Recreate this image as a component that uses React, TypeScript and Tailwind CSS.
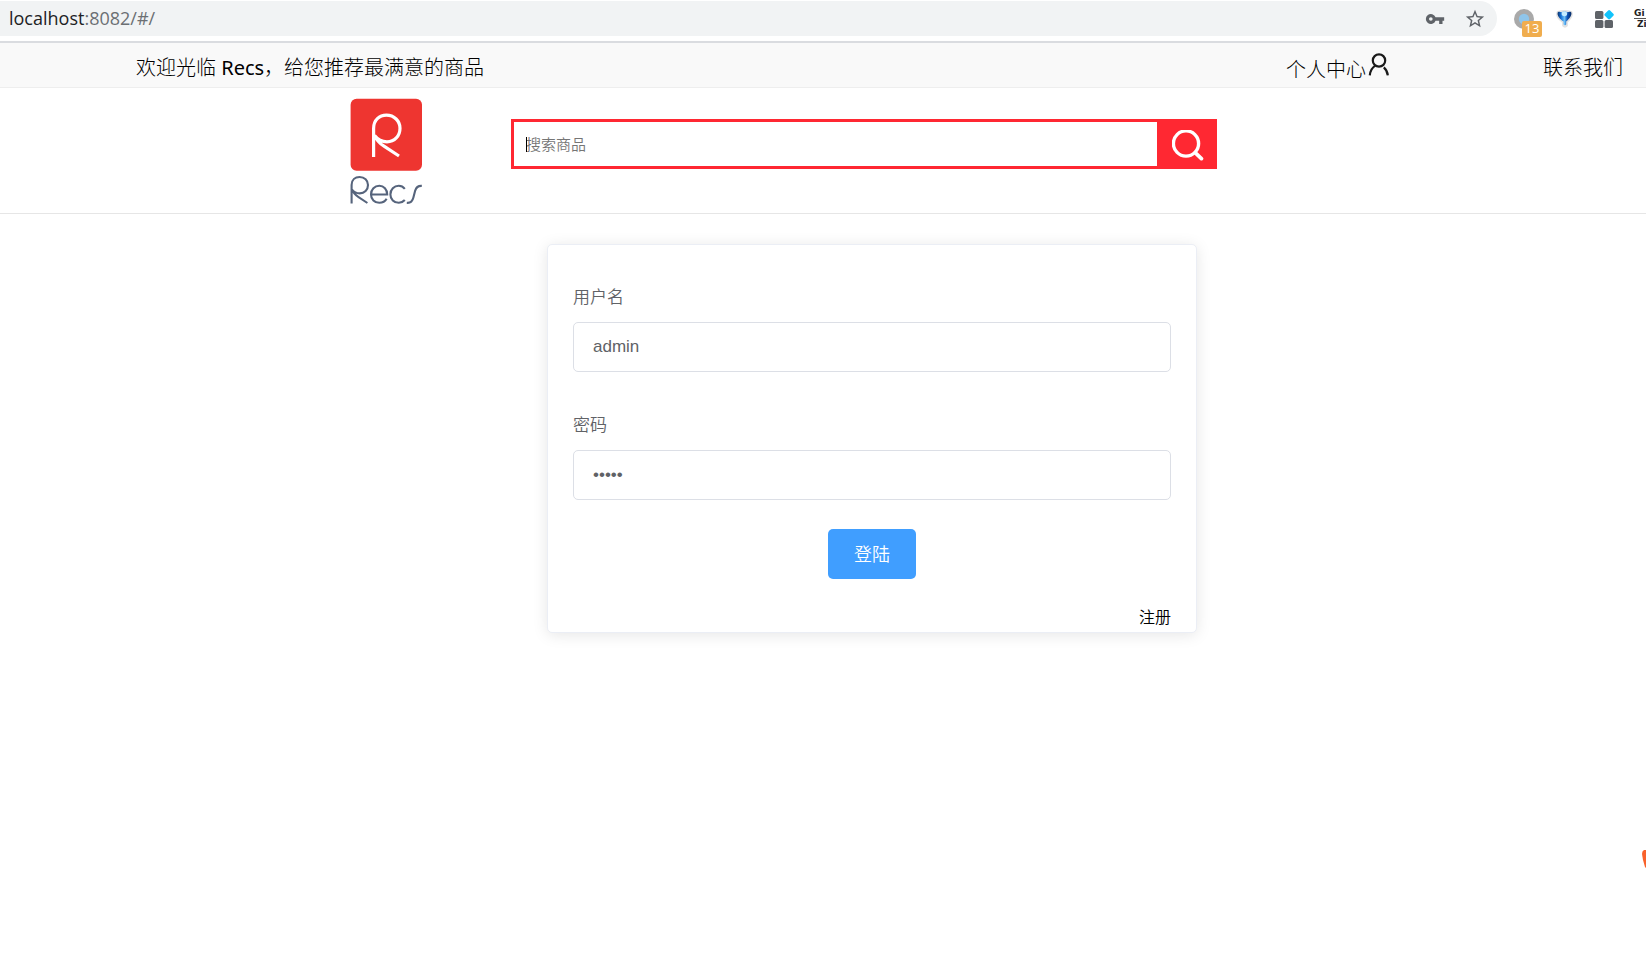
import React from "react";

function KeyIcon() {
  return (
    <svg viewBox="0 0 24 24" className="size-5 shrink-0" fill="#5f6368" aria-hidden="true">
      <path d="M12.65 10A6 6 0 1 0 12.65 14H17v4h4v-4h2v-4H12.65zM7 14.2a2.2 2.2 0 1 1 0-4.4 2.2 2.2 0 0 1 0 4.4z" />
    </svg>
  );
}

function StarIcon() {
  return (
    <svg viewBox="0 0 24 24" className="size-[22px] shrink-0" fill="#5f6368" aria-hidden="true">
      <path d="M22 9.24l-7.19-.62L12 2 9.19 8.63 2 9.24l5.46 4.73L5.82 21 12 17.27 18.18 21l-1.63-7.03L22 9.24zM12 15.4l-3.76 2.27 1-4.28-3.32-2.88 4.38-.38L12 6.1l1.71 4.04 4.38.38-3.32 2.88 1 4.28L12 15.4z" />
    </svg>
  );
}

function BrowserBar() {
  return (
    <div className="flex h-[43px] items-start overflow-hidden border-b-2 border-[#dadce0] bg-white pt-px font-['Open_Sans','Noto_Sans',sans-serif] font-normal">
      <div className="flex h-[35px] min-w-0 flex-1 items-center rounded-r-full bg-[#f1f3f4] pr-[11px] pl-[9px]">
        <span className="flex-1 pb-0.5 text-lg text-[#6b6f73]">
          <span className="text-[#202124]">localhost</span>:8082/#/
        </span>
        <div className="flex items-center gap-[19px]">
          <button type="button" aria-label="key" className="flex">
            <KeyIcon />
          </button>
          <button type="button" aria-label="star" className="flex">
            <StarIcon />
          </button>
        </div>
      </div>
      <div className="flex h-[35px] w-[149px] shrink-0 items-center pl-[17px]">
        <div className="relative mr-5 size-5 shrink-0">
          <svg viewBox="0 0 20 20" className="size-5" aria-hidden="true">
            <circle cx="10" cy="10" r="10" fill="#a9a9a9" />
            <circle cx="10" cy="10" r="5.2" fill="#8fc5ea" />
          </svg>
          <span className="absolute top-3 left-2 flex h-4 w-5 items-center justify-center rounded-xs bg-[#f0ad4e] text-[13px] leading-none text-white">
            13
          </span>
        </div>
        <svg viewBox="0 0 20 20" className="mr-5 size-5 shrink-0" aria-hidden="true">
          <defs>
            <linearGradient id="drop" x1="0" x2="1" y1="0" y2="0">
              <stop offset="0" stopColor="#0a2f66" />
              <stop offset="0.25" stopColor="#1672d6" />
              <stop offset="0.5" stopColor="#6cc0f8" />
              <stop offset="0.7" stopColor="#0f55b8" />
              <stop offset="1" stopColor="#082a63" />
            </linearGradient>
          </defs>
          <path
            d="M3.8 3C8 2 13 2 17.2 3C19 6.4 15.6 10.4 12.8 13V16.6Q11 18.6 9.2 16.6V13C5.4 10.4 2 6.4 3.8 3Z"
            fill="#ffffff"
            stroke="#e2e2e2"
            strokeWidth="2.2"
          />
          <path
            d="M3.8 3.2C5.2 2.4 6.4 3 7.4 3.2C9 2.4 12 2.4 13.6 3.2C14.6 3 15.8 2.4 17.2 3.2C18.4 6.4 14.8 10 12.2 12.6V15.6Q11 17.2 9.6 15.6V12.6C6 10 2.6 6.4 3.8 3.2Z"
            fill="url(#drop)"
          />
          <ellipse cx="10.4" cy="4.8" rx="2.8" ry="2.4" fill="#c4ecff" />
        </svg>
        <svg viewBox="0 0 20 20" className="mr-5 size-5 shrink-0" aria-hidden="true">
          <rect x="1" y="2" width="8.4" height="8" rx="1.5" fill="#5f6368" />
          <rect x="1" y="11" width="8.4" height="8" rx="1.5" fill="#5f6368" />
          <rect x="10.6" y="11" width="8.4" height="8" rx="1.5" fill="#5f6368" />
          <rect x="11.4" y="2" width="7.4" height="7.4" rx="1.4" fill="#12c3fb" transform="rotate(45 15.1 5.7)" />
        </svg>
        <div className="flex w-3 shrink-0 flex-col font-['DejaVu_Sans'] text-[9px] leading-[10px] font-bold text-[#222]">
          <span className="border-b border-[#555]">Gi</span>
          <span className="pl-[3px]">Zi</span>
        </div>
      </div>
    </div>
  );
}

function UserIcon() {
  return (
    <svg viewBox="0 0 22 24" className="mb-1.5 h-6 w-[22px]" fill="none" stroke="#1a1a1a" strokeWidth="2.2" aria-hidden="true">
      <circle cx="11" cy="7.5" r="6.2" />
      <path d="M7.4 12.6C4 14.6 2.2 17.8 1.8 22.4M15.8 14.4C18.2 16.4 19.4 19 19.8 22.4" />
    </svg>
  );
}

function TopBar() {
  return (
    <nav className="flex h-[45px] items-center border-b border-[#eeeeee] bg-[#f9f9f9] pt-[5px] pr-[23px] pl-[136px] text-xl font-light text-black">
      <span className="flex-1">
        欢迎光临 <span className="font-normal">Recs</span>，给您推荐最满意的商品
      </span>
      <a href="#/user" className="mr-[153px] flex items-center">
        <span className="pt-1">个人中心</span>
        <span className="pl-0.5">
          <UserIcon />
        </span>
      </a>
      <a href="#/contact">联系我们</a>
    </nav>
  );
}

function Logo() {
  return (
    <svg viewBox="0 0 74 108" className="h-[108px] w-[74px] shrink-0" fill="none" role="img" aria-label="Recs">
      <rect x="0.6" y="0.8" width="71.4" height="72" rx="6" fill="#ee3530" />
      <path
        d="M23.6 59V30.5C23.6 22 29.4 17.2 36.4 17.2C44.2 17.2 50 23 50 30.2C50 38 44.5 43.8 37 43.8C31.5 43.8 27.5 41.3 24.6 37.5C26.6 42.5 29.6 45.5 34 48.2L49 58"
        stroke="#fff"
        strokeWidth="3.2"
      />
      <g stroke="#56647c" strokeWidth="2.1">
        <path d="M1.6 105.5V87C1.6 81.5 5.2 79 9.6 79C14.5 79 18 82.4 18 87C18 92 14.4 95.4 9.8 95.4C6.4 95.4 3.8 94 2 91.5C3.2 94.8 5.2 97 8.2 98.8L17.4 105" />
        <path d="M21.2 96.5H37.2C37.2 91.2 33.8 87.8 29.3 87.8C24.6 87.8 21 91.6 21 96.4C21 101.3 24.6 104.8 29.3 104.8C32.6 104.8 35.2 103.4 36.6 100.8" />
        <path d="M54.8 90.8C53.2 88.8 51.2 87.8 48.8 87.8C44 87.8 40.4 91.6 40.4 96.4C40.4 101.2 44 104.8 48.8 104.8C51.2 104.8 53.2 103.8 54.8 102" />
        <path d="M71.8 87.9C67.8 87.6 66.2 89.4 65.2 92.6L63.4 99.4C62.4 103.4 60.6 105.2 56.8 104.8" />
      </g>
    </svg>
  );
}

function Header() {
  return (
    <header className="flex h-[126px] items-start border-b border-[#e6e6e6] bg-white pl-[350px]">
      <div className="mt-2.5 mr-[87px]">
        <Logo />
      </div>
      <form className="mt-[31px] flex h-[50px] w-[706px]" onSubmit={(e) => e.preventDefault()}>
        <div className="relative flex-1">
          <input
            type="text"
            aria-label="搜索商品"
            placeholder="搜索商品"
            className="h-full w-full border-[3px] border-r-0 border-[#ff2832] pl-3 text-[15px] outline-none placeholder:text-[#757575]"
          />
          <span className="absolute top-[18px] left-[15px] h-[15px] w-px bg-black" />
        </div>
        <button type="submit" aria-label="搜索" className="flex w-[60px] items-center justify-center bg-[#ff2832]">
          <svg viewBox="0 0 32 32" className="mt-1 ml-0.5 size-8" fill="none" stroke="#fff" strokeLinecap="round" aria-hidden="true">
            <circle cx="14" cy="13.5" r="12.6" strokeWidth="3.4" />
            <path d="M23.4 22.9L29.4 28.6" strokeWidth="3.8" />
          </svg>
        </button>
      </form>
    </header>
  );
}

const inputClass =
  "h-[50px] w-full rounded-[5px] border border-[#dcdfe6] bg-white px-[19px] font-['Liberation_Sans',Arial,sans-serif] text-[17px] font-normal text-[#606266] outline-none";

function LoginCard() {
  return (
    <form
      onSubmit={(e) => e.preventDefault()}
      className="flex w-[650px] max-w-full flex-col rounded-[5px] border border-[#ebeef5] bg-white px-[25px] pt-[26px] pb-[3px] shadow-[0_2px_15px_0_rgba(0,0,0,0.1)]"
    >
      <label htmlFor="username" className="h-[51px] pt-px text-[17px] leading-[50px] text-[#606266]">
        用户名
      </label>
      <input id="username" type="text" defaultValue="admin" className={inputClass} />
      <label htmlFor="password" className="mt-[27px] h-[51px] pt-px text-[17px] leading-[50px] text-[#606266]">
        密码
      </label>
      <input id="password" type="password" defaultValue="admin" className={inputClass} />
      <button
        type="submit"
        className="mt-[29px] h-[50px] w-[88px] self-center rounded-[5px] bg-[#409eff] text-lg text-white"
      >
        登陆
      </button>
      <a href="#/register" className="mt-[26px] self-end text-base text-black">
        注册
      </a>
    </form>
  );
}

export default function App() {
  return (
    <div className="min-h-screen overflow-x-hidden bg-white font-['Noto_Sans','Noto_Sans_CJK_SC',sans-serif] font-[350]">
      <BrowserBar />
      <TopBar />
      <Header />
      <main className="flex justify-center pt-[30px] pb-10 pl-[98px]">
        <LoginCard />
      </main>
      <svg viewBox="0 0 4 18" className="fixed top-[850px] right-0 h-[18px] w-1" aria-hidden="true">
        <path d="M4 0H2Q0 1 0 4L1 10L3 17L4 18Z" fill="#f9622b" />
      </svg>
    </div>
  );
}
